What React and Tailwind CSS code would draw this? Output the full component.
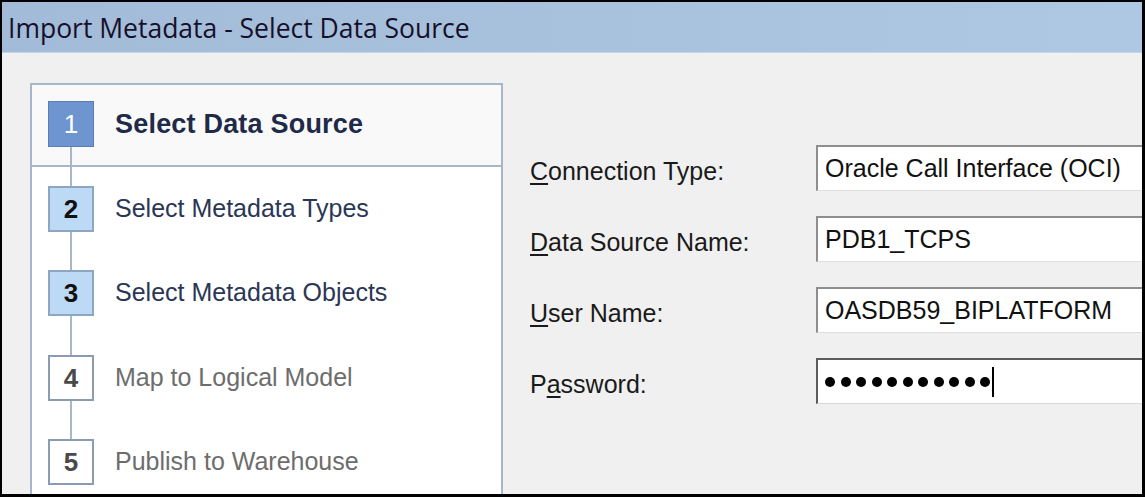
import React from "react";

const steps = [
  { n: 1, label: "Select Data Source", state: "active" },
  { n: 2, label: "Select Metadata Types", state: "done" },
  { n: 3, label: "Select Metadata Objects", state: "done" },
  { n: 4, label: "Map to Logical Model", state: "todo" },
  { n: 5, label: "Publish to Warehouse", state: "todo" },
];

const boxClass = {
  active: "bg-[#6f95d0] border border-[#5a7ebb] text-white font-normal",
  done: "bg-[#bcdaf6] border-2 border-[#8fa6c3] text-[#111] font-bold",
  todo: "bg-white border-2 border-[#8b9bb1] text-[#4a4a4a] font-bold",
};

const labelClass = {
  active: "font-bold text-[#1e2a48] text-[27px] tracking-[0.2px]",
  done: "text-[#2b3656] text-[25px]",
  todo: "text-[#6d6d6d] text-[25px]",
};

function Step({ step, top, bottom, height }) {
  const pad = step.n === 1 ? 16 : 19;
  return (
    <div className="flex pl-[16px] shrink-0" style={{ height }}>
      <div className="w-[46px] flex flex-col items-center">
        <div className={top ? "w-[2px] shrink-0 bg-[#a8b6ca]" : "w-[2px] shrink-0"} style={{ height: pad }} />
        <div
          className={
            "w-[46px] h-[46px] shrink-0 flex items-center justify-center text-[26px] font-['Liberation_Sans',Arial,sans-serif] " +
            boxClass[step.state]
          }
        >
          {step.n}
        </div>
        {bottom && <div className="w-[2px] flex-1 bg-[#a8b6ca]" />}
      </div>
      <div
        className={"ml-[21px] pt-[2px] flex items-center font-['Liberation_Sans',Arial,sans-serif] " + labelClass[step.state]}
        style={{ height: pad * 2 + 46 - 2 }}
      >
        {step.label}
      </div>
    </div>
  );
}

function Field({ label, accel, children, dark }) {
  const i = label.indexOf(accel);
  return (
    <>
      <div className="h-[46px] flex items-center pt-[8px] text-[25px] text-[#1a1a1a] font-['Liberation_Sans',Arial,sans-serif]">
        <span>
          {label.slice(0, i)}
          <span className="underline underline-offset-[3px] decoration-[1.5px]">{accel}</span>
          {label.slice(i + 1)}
        </span>
      </div>
      <div className="h-[46px] overflow-hidden">
        <div
          className={
            "h-[46px] w-[500px] bg-white border-t-2 border-l-2 border-b flex items-center pl-[7px] text-[25px] text-[#111] font-['Liberation_Sans',Arial,sans-serif] " +
            (dark
              ? "border-t-[#5c5c5c] border-l-[#5c5c5c] border-b-[#d8d8d8]"
              : "border-t-[#8e8e8e] border-l-[#8e8e8e] border-b-[#dedede]")
          }
        >
          {children}
        </div>
      </div>
    </>
  );
}

export default function App() {
  return (
    <div className="w-[1145px] h-[497px] box-border border-t-2 border-l-2 border-r-[3px] border-b-[3px] border-black flex flex-col overflow-hidden">
      <div className="h-[51px] shrink-0 bg-linear-to-r from-[#a2bbd8] to-[#aec8e3] border-b border-[#c5d6e9] flex items-center pl-[6px] pt-[3px]">
        <span className="text-[26.5px] text-[#16102a] font-['Open_Sans',sans-serif]">
          Import Metadata - Select Data Source
        </span>
      </div>

      <div className="flex-1 flex bg-[#f0f0f0] overflow-hidden">
        {/* wizard steps */}
        <div className="ml-[28px] mt-[30px] w-[473px] shrink-0 border-2 border-b-0 border-[#a8b6ca] bg-white flex flex-col overflow-hidden">
          <div className="bg-[#f9f9f9] shrink-0">
            <Step step={steps[0]} bottom height={80} />
          </div>
          <div className="h-[2px] shrink-0 bg-[#a8b6ca]" />
          <Step step={steps[1]} top bottom height={84} />
          <Step step={steps[2]} top bottom height={85} />
          <Step step={steps[3]} top bottom height={84} />
          <Step step={steps[4]} top height={84} />
        </div>

        {/* connection form */}
        <div className="flex-1 pl-[27px] pt-[92px] overflow-hidden">
          <div className="grid grid-cols-[286px_1fr] gap-y-[25px]">
            <Field label="Connection Type:" accel="C">
              Oracle Call Interface (OCI)
            </Field>
            <Field label="Data Source Name:" accel="D">
              PDB1_TCPS
            </Field>
            <Field label="User Name:" accel="U">
              OASDB59_BIPLATFORM
            </Field>
            <Field label="Password:" accel="a" dark>
              <div className="flex items-center gap-[5.5px]">
                {Array.from({ length: 11 }).map((_, k) => (
                  <span key={k} className="w-[10px] h-[10px] rounded-full bg-black" />
                ))}
              </div>
              <span className="ml-[2px] w-[2px] h-[30px] bg-black" />
            </Field>
          </div>
        </div>
      </div>
    </div>
  );
}
